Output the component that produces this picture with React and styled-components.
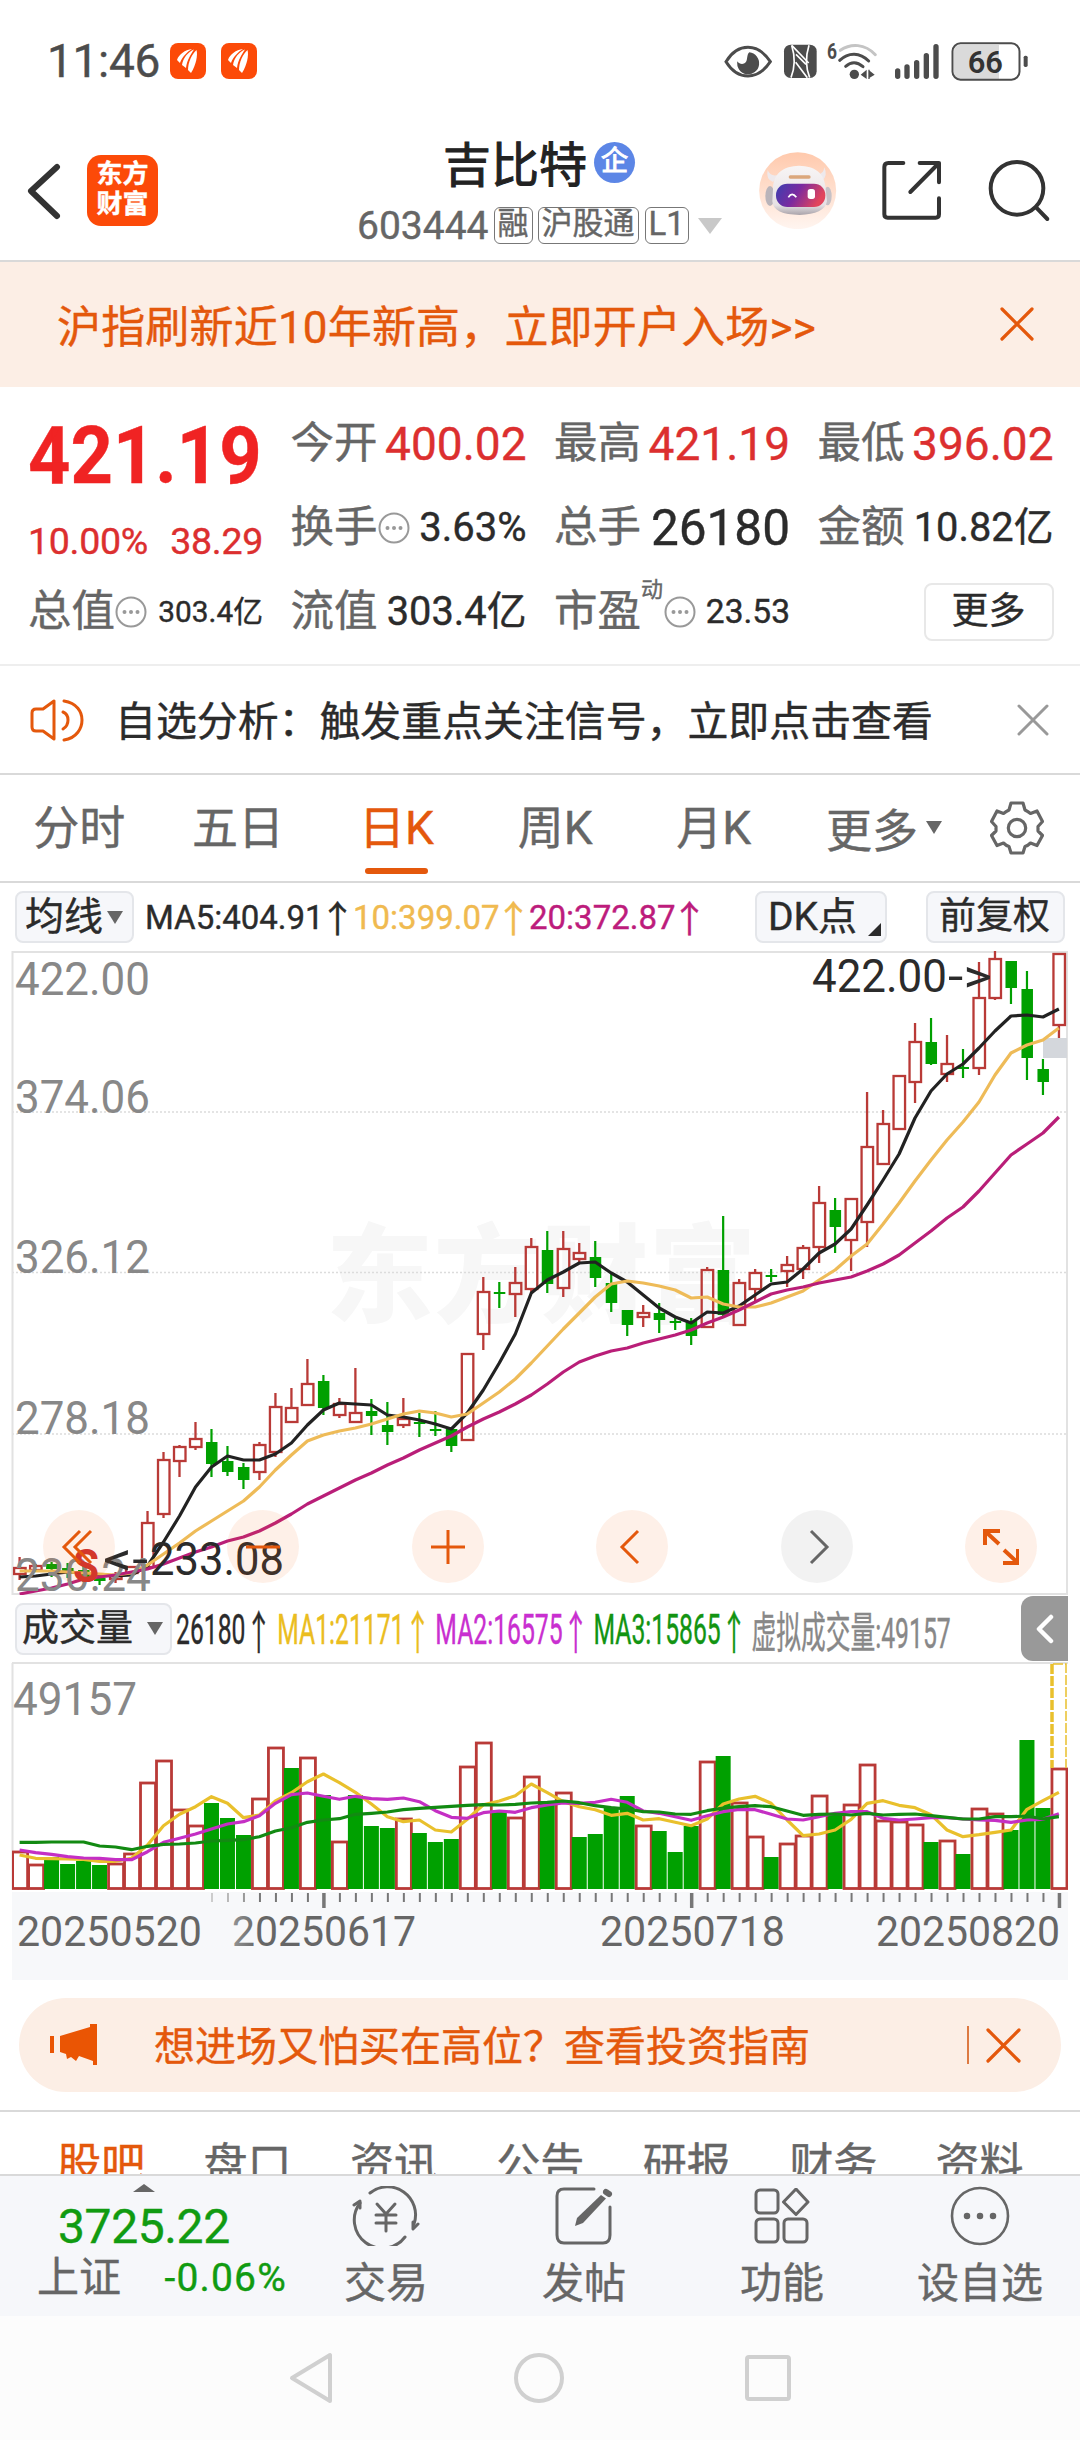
import styled, { createGlobalStyle, css } from 'styled-components';

const ORANGE = '#e4580c';
const PEACH = '#fceee5';
const RED = '#dc2f2f';
const UP = '#b93a37';
const DOWN = '#00a000';
const INK = '#2b2b2b';
const GREY = '#666';

const GlobalStyle = createGlobalStyle`
  * { box-sizing: border-box; }
  body {
    margin: 0;
    background: #fff;
    color: ${INK};
    font-family: Roboto, "Noto Sans CJK SC", sans-serif;
    -webkit-font-smoothing: antialiased;
    -webkit-text-stroke: 0.4px;
  }
  svg { display: block; flex: none; -webkit-text-stroke: 0; }
`;

/* ---------- chart data ---------- */

// [high, body top, body bottom, low, up?]
const candles = [
  [1557, 1568, 1574, 1580, 1], [1564, 1566, 1570, 1572, 1], [1562, 1564, 1569, 1577, 0],
  [1563, 1568, 1573, 1578, 0], [1566, 1570, 1579, 1582, 0], [1575, 1578, 1581, 1585, 0],
  [1572, 1576, 1579, 1583, 1], [1566, 1567, 1573, 1574, 1], [1511, 1523, 1567, 1568, 1],
  [1452, 1460, 1514, 1518, 1], [1445, 1447, 1461, 1477, 1], [1422, 1439, 1447, 1450, 1],
  [1429, 1442, 1464, 1477, 0], [1446, 1461, 1472, 1476, 0], [1463, 1467, 1480, 1489, 0],
  [1442, 1445, 1472, 1480, 1], [1393, 1407, 1452, 1457, 1], [1388, 1408, 1422, 1423, 1],
  [1359, 1384, 1405, 1406, 1], [1375, 1381, 1408, 1415, 0], [1398, 1404, 1415, 1418, 1],
  [1368, 1413, 1422, 1423, 1], [1399, 1411, 1416, 1435, 0], [1402, 1425, 1432, 1445, 0],
  [1398, 1419, 1425, 1428, 1], [1413, 1422, 1423, 1437, 0], [1411, 1429, 1431, 1436, 0],
  [1427, 1429, 1446, 1452, 0], [1354, 1354, 1440, 1440, 1], [1277, 1292, 1334, 1350, 1],
  [1282, 1292, 1294, 1308, 0], [1267, 1283, 1294, 1317, 1], [1238, 1247, 1289, 1293, 1],
  [1231, 1250, 1284, 1293, 0], [1231, 1249, 1288, 1297, 1], [1243, 1253, 1259, 1263, 1],
  [1241, 1257, 1278, 1287, 0], [1273, 1283, 1303, 1312, 0], [1310, 1310, 1325, 1336, 0],
  [1305, 1313, 1317, 1327, 1], [1303, 1313, 1320, 1333, 0], [1317, 1321, 1322, 1330, 0],
  [1318, 1321, 1336, 1345, 0], [1267, 1270, 1327, 1328, 1], [1216, 1270, 1315, 1317, 0],
  [1279, 1283, 1325, 1326, 1], [1269, 1273, 1289, 1302, 1], [1269, 1275, 1276, 1282, 0],
  [1256, 1265, 1271, 1287, 1], [1245, 1248, 1269, 1279, 1], [1186, 1203, 1247, 1263, 1],
  [1198, 1210, 1227, 1253, 0], [1198, 1199, 1240, 1271, 1], [1092, 1147, 1222, 1247, 1],
  [1110, 1124, 1164, 1165, 1], [1076, 1076, 1129, 1129, 1], [1023, 1042, 1082, 1103, 1],
  [1018, 1042, 1064, 1065, 0], [1035, 1064, 1074, 1082, 1], [1049, 1067, 1069, 1078, 0],
  [962, 998, 1068, 1075, 1], [951, 959, 998, 1000, 1], [961, 961, 988, 1004, 0],
  [971, 989, 1058, 1080, 0], [1059, 1069, 1082, 1095, 0], [953, 954, 1025, 1038, 1],
];

const ma5 = [
  1577, 1576, 1574, 1572, 1573, 1575, 1576, 1575, 1566, 1542, 1516, 1487, 1467, 1456, 1460, 1460, 1454,
  1443, 1425, 1410, 1403, 1404, 1405, 1415, 1417, 1420, 1424, 1429, 1413, 1390, 1363, 1334, 1293,
  1280, 1272, 1263, 1262, 1273, 1282, 1295, 1308, 1317, 1323, 1312, 1313, 1306, 1295, 1284, 1282,
  1269, 1253, 1244, 1229, 1205, 1180, 1154, 1118, 1091, 1074, 1064, 1048, 1031, 1016, 1015, 1017, 1009,
];
const ma10 = [
  1571, 1571, 1571, 1572, 1573, 1574, 1575, 1573, 1565, 1554, 1543, 1531, 1521, 1511, 1501, 1487, 1470,
  1455, 1441, 1435, 1431, 1428, 1424, 1419, 1414, 1411, 1413, 1417, 1414, 1403, 1392, 1379, 1363,
  1346, 1329, 1313, 1297, 1284, 1281, 1283, 1286, 1290, 1298, 1297, 1304, 1307, 1307, 1303, 1297,
  1291, 1280, 1270, 1256, 1244, 1224, 1203, 1181, 1160, 1140, 1122, 1102, 1075, 1053, 1045, 1040, 1028,
];
const ma20 = [
  1594, 1591, 1588, 1584, 1579, 1577, 1575, 1572, 1569, 1564, 1558, 1552, 1547, 1541, 1537, 1531, 1523,
  1514, 1504, 1496, 1488, 1480, 1473, 1465, 1458, 1450, 1443, 1436, 1427, 1419, 1412, 1404, 1395,
  1384, 1372, 1362, 1356, 1351, 1348, 1343, 1339, 1335, 1330, 1323, 1317, 1310, 1302, 1294, 1290,
  1287, 1283, 1280, 1277, 1271, 1264, 1255, 1243, 1231, 1218, 1207, 1191, 1173, 1155, 1144, 1133, 1117,
];

// top edge of every volume bar, same order as the candles
const volumeTops = [
  1852, 1865, 1857, 1864, 1861, 1865, 1864, 1854, 1783, 1761, 1810, 1826, 1803, 1818, 1835, 1799, 1748,
  1768, 1758, 1795, 1842, 1795, 1826, 1828, 1819, 1833, 1842, 1839, 1767, 1743, 1812, 1818, 1777,
  1803, 1793, 1837, 1834, 1808, 1796, 1826, 1831, 1852, 1826, 1762, 1756, 1803, 1837, 1857, 1844,
  1836, 1796, 1813, 1805, 1765, 1821, 1822, 1825, 1842, 1841, 1854, 1809, 1814, 1830, 1740, 1808, 1769,
];
const volumeDown = [
  2, 3, 4, 5, 12, 13, 14, 17, 19, 21, 22, 23, 25, 26, 27, 30, 33, 35, 36, 37, 38, 40, 41, 42, 44,
  47, 51, 57, 59, 62, 63, 64,
];

// volume averages are kept at three steps per pixel
const vma1 = [
  645, 655, 656, 657, 658, 664, 664, 655, 615, 557, 523, 500, 470, 490, 533, 525, 483, 458, 425, 402,
  428, 457, 492, 530, 545, 540, 570, 576, 538, 494, 483, 467, 432, 458, 485, 500, 509, 526, 520, 540,
  536, 547, 557, 537, 492, 477, 469, 490, 540, 587, 582, 570, 538, 490, 482, 496, 503, 524, 570, 590,
  584, 577, 570, 508, 482, 457,
];
const vma2 = [
  630, 638, 643, 650, 654, 655, 659, 659, 635, 607, 595, 582, 567, 552, 545, 527, 490, 464, 459, 469,
  478, 469, 476, 478, 474, 485, 512, 532, 535, 518, 513, 517, 503, 495, 489, 490, 487, 478, 487, 513,
  520, 530, 541, 527, 515, 508, 509, 523, 537, 540, 530, 520, 515, 515, 535, 540, 537, 533, 533, 537,
  540, 541, 547, 540, 538, 521,
];
const vma3 = [
  607, 607, 606, 606, 606, 618, 621, 629, 619, 613, 612, 609, 603, 601, 599, 590, 573, 563, 547, 540,
  536, 523, 520, 516, 509, 505, 502, 499, 496, 494, 495, 493, 489, 487, 483, 488, 497, 503, 507, 515,
  516, 522, 523, 512, 504, 500, 497, 500, 513, 526, 523, 522, 525, 520, 525, 523, 522, 527, 532, 537,
  537, 530, 530, 528, 537, 530,
];

const cx = (i) => 19.6 + 15.99 * i;
const line = (ys) => ys.map((y, i) => `${cx(i).toFixed(1)},${y}`).join(' ');
const volLine = (ys) => line(ys.map((v) => (1640 + v / 3).toFixed(1)));

/* ---------- small drawings ---------- */

// box is in drawing units, k is how many units make one pixel
const Drawing = ({ box, k = 1, children, ...rest }) => (
  <svg viewBox={box.join(' ')} width={box[2] / k} height={box[3] / k} fill="none" {...rest}>
    {children}
  </svg>
);

const AppBadge = () => (
  <Drawing box={[0, 0, 36, 36]}>
    <rect width="36" height="36" rx="8" fill="#fc4a08" />
    <path d="M7 17C9 11 15 7 22 6C17 9 12 14 10 20Z" fill="#fff" />
    <path d="M12 22C13 15 18 9 24 6.500C21 11 17 17 16 25Z" fill="#fff" />
    <path d="M18 27C18 19 22 11 26.500 7C28 12 26 22 21 30Z" fill="#fff" />
  </Drawing>
);

const Eye = () => (
  <Drawing box={[72, 120, 162, 120]} k={3}>
    <path d="M78 182C96 153 120 139 144 139S192 153 211 182C192 211 168 225 144 225S96 211 78 182Z" stroke="#4c4c4c" strokeWidth="9" />
    <path d="M148 154A33 33 0 1 1 112 181C118 190 130 192 137 184C144 176 139 162 148 154Z" fill="#4c4c4c" />
  </Drawing>
);

const Nfc = () => (
  <Drawing box={[234, 120, 132, 120]} k={3}>
    <rect x="252" y="131" width="98" height="100" rx="20" fill="#4c4c4c" />
    <path d="M275 133C285 165 285 200 273 230" stroke="#fff" strokeWidth="5" />
    <path d="M276 134L326 186M288 160L318 190M287 184L322 230" stroke="#fff" strokeWidth="5" />
    <path d="M327 133C317 165 317 200 329 230" stroke="#fff" strokeWidth="5" />
  </Drawing>
);

const Wifi = () => (
  <Drawing box={[366, 120, 192, 120]} k={3}>
    <text x="381" y="173" fontSize="66" fontWeight="700" fill="#4c4c4c" textLength="30" lengthAdjust="spacingAndGlyphs">6</text>
    <g strokeLinecap="round" stroke="#4c4c4c" strokeWidth="9">
      <path d="M421 148C453 126 495 128 526 161" stroke="#c4c4c4" />
      <path d="M419 178C445 153 480 153 506 180" />
      <path d="M437 196C453 182 472 182 489 197" />
    </g>
    <circle cx="463" cy="220" r="14" fill="#4c4c4c" />
    <path d="M482 221L500 206V234Z M505 206H509V234H505Z M509 209L524 221L509 230Z" fill="#4c4c4c" />
  </Drawing>
);

const Signal = () => (
  <Drawing box={[558, 120, 177, 120]} k={3}>
    <g stroke="#4c4c4c" strokeWidth="16" strokeLinecap="round">
      <path d="M593 210V226M621 198V226M650 185V226M679 164V226M708 137V226" />
    </g>
  </Drawing>
);

const Battery = () => (
  <Drawing box={[735, 120, 255, 120]} k={3}>
    <path d="M780 132H897V234H780Q762 234 762 214V152Q762 132 780 132Z" fill="#dadada" />
    <rect x="757.500" y="127" width="201" height="109" rx="24" stroke="#4c4c4c" strokeWidth="6" />
    <rect x="971" y="164" width="12" height="34" rx="5" fill="#4c4c4c" />
    <text x="803" y="217" fontSize="94" fontWeight="600" fill="#333" textLength="106" lengthAdjust="spacingAndGlyphs">66</text>
  </Drawing>
);

const Back = () => (
  <Drawing box={[28, 162, 34, 58]}>
    <path d="M58 167L32 191L58 216" stroke="#333" strokeWidth="6" strokeLinecap="round" strokeLinejoin="round" />
  </Drawing>
);

const Robot = () => (
  <Drawing box={[180, 458, 232, 232]} k={3}>
    <defs>
      <linearGradient id="halo" x1="0" y1="0" x2="0" y2="1">
        <stop offset="0" stopColor="#ffc9ac" />
        <stop offset="1" stopColor="#fff5f0" />
      </linearGradient>
      <linearGradient id="visor" x1="0" y1="0" x2="1" y2=".3">
        <stop offset="0" stopColor="#3b3fb0" />
        <stop offset=".5" stopColor="#7a2aa0" />
        <stop offset="1" stopColor="#e2455c" />
      </linearGradient>
      <linearGradient id="helmet" x1="0" y1="0" x2="0" y2="1">
        <stop offset="0" stopColor="#f8f5f5" />
        <stop offset=".8" stopColor="#e6e1e4" />
        <stop offset="1" stopColor="#a9a3aa" />
      </linearGradient>
    </defs>
    <circle cx="296" cy="574" r="115.500" fill="url(#halo)" />
    <ellipse cx="213" cy="590" rx="14" ry="30" fill="#b9b4ba" />
    <ellipse cx="386" cy="590" rx="12" ry="28" fill="#c6c1c6" />
    <path d="M206 512Q200 540 222 548L240 526Q214 534 206 512ZM376 504Q388 530 368 546L350 524Q374 528 376 504Z" fill="#eee9ec" />
    <path d="M222 570C222 520 255 500 300 499C348 500 378 520 380 570L384 606C380 632 350 646 302 647C250 646 222 634 220 606Z" fill="url(#helmet)" />
    <path d="M274 533H330" stroke="#dba77c" strokeWidth="10" strokeLinecap="round" />
    <rect x="231" y="553" width="148" height="70" rx="34" fill="url(#visor)" />
    <path d="M268 594Q279 576 292 594" stroke="#fff" strokeWidth="5" />
    <rect x="326" y="569" width="22" height="30" rx="8" fill="#fff" />
  </Drawing>
);

const Share = () => (
  <Drawing box={[540, 480, 184, 188]} k={3}>
    <path d="M607 492H562Q550 492 550 504V646Q550 656 560 656H704Q714 656 714 646V598M656 492H714V550M714 492L628 579" stroke="#333" strokeWidth="12" strokeLinecap="round" strokeLinejoin="round" />
  </Drawing>
);

const Search = () => (
  <Drawing box={[860, 474, 192, 196]} k={3}>
    <circle cx="950" cy="565" r="79" stroke="#333" strokeWidth="12" />
    <path d="M1008 623L1041 657" stroke="#333" strokeWidth="12" strokeLinecap="round" />
  </Drawing>
);

const Cross = ({ size = 34, color = ORANGE, weight = 3.2 }) => (
  <Drawing box={[0, 0, size, size]}>
    <path d={`M2 2L${size - 2} ${size - 2}M${size - 2} 2L2 ${size - 2}`} stroke={color} strokeWidth={weight} strokeLinecap="round" />
  </Drawing>
);

const Dots = () => (
  <Drawing box={[0, 0, 32, 32]}>
    <circle cx="16" cy="16" r="14.500" stroke="#999" strokeWidth="2" />
    <path d="M9.500 16H9.510M16 16H16.010M22.500 16H22.510" stroke="#999" strokeWidth="4" strokeLinecap="round" />
  </Drawing>
);

const Speaker = () => (
  <Drawing box={[30, 697, 56, 44]}>
    <g stroke={ORANGE} strokeWidth="3" strokeLinejoin="round" strokeLinecap="round">
      <path d="M54 700V738L43 730H36Q32 730 32 726V712Q32 708 36 708H43Z" />
      <path d="M63 711Q68 713 68 719T63 728M64 700C77 702 82 711 82 719S77 737 64 739" />
    </g>
  </Drawing>
);

const Gear = () => (
  <Drawing box={[0, 0, 54, 54]}>
    <g stroke="#666" strokeWidth="3.200" strokeLinejoin="round">
      <path d="M21 2H33L35 9Q38 10.500 40.500 12.500L47 10L52.500 20.500L48 25.500V30L52.500 34.500L47 44.500L40.500 42Q38 44.500 35 45.500L33 52H21L19 45.500Q16 44.500 13.500 42L7 44.500L1.500 34.500L6 30V25.500L1.500 20.500L7 10L13.500 12.500Q16 10.500 19 9Z" />
      <circle cx="27" cy="27" r="8.700" />
    </g>
  </Drawing>
);

const Horn = () => (
  <Drawing box={[50, 2024, 48, 44]}>
    <path d="M50 2037H54V2054H50ZM60 2037L90 2028V2025H97V2066H93V2062L79 2057L76 2062L71 2058L67 2060L66 2055L60 2053Z" fill="#ea5504" />
  </Drawing>
);

const Trade = () => (
  <Drawing box={[0, 0, 68, 60]}>
    <g stroke={GREY} strokeWidth="3" strokeLinecap="round" strokeLinejoin="round">
      <path d="M18 7A28 28 0 0 1 62 38M53 51A28 28 0 0 1 8 17" />
      <path d="M2 19L8 15L8 22M66 38L61 43L61 36" />
      <path d="M25 18L34 28L43 18M34 28V45M24 29H44M24 37H44" />
    </g>
  </Drawing>
);

const Compose = () => (
  <Drawing box={[0, 0, 58, 58]}>
    <path d="M39 2H9Q2 2 2 9V48Q2 56 9 56H48Q55 56 55 48V20" stroke={GREY} strokeWidth="3" strokeLinecap="round" />
    <path d="M46 8L51 11.500L28 36L20 39L22 31Z" fill={GREY} />
    <path d="M51 5L54 7" stroke={GREY} strokeWidth="6" strokeLinecap="round" />
  </Drawing>
);

const Modules = () => (
  <Drawing box={[0, 0, 56, 56]}>
    <g stroke={GREY} strokeWidth="3" strokeLinejoin="round">
      <rect x="2" y="2" width="22" height="23" rx="4" />
      <rect x="2" y="31" width="22" height="23" rx="4" />
      <rect x="30" y="31" width="23" height="23" rx="4" />
      <path d="M42 1L54 14L42 26.500L29.500 14Z" />
    </g>
  </Drawing>
);

const MoreCircle = () => (
  <Drawing box={[0, 0, 60, 60]}>
    <circle cx="30" cy="30" r="28" stroke={GREY} strokeWidth="2.600" />
    <path d="M17 30H17.010M30 30H30.010M43 30H43.010" stroke={GREY} strokeWidth="6.500" strokeLinecap="round" />
  </Drawing>
);

const Caret = styled.i`
  width: 0;
  height: 0;
  flex: none;
  border: ${({ $w }) => $w / 2}px solid transparent;
  border-bottom-width: 0;
  border-top: ${({ $h }) => $h}px solid ${({ $c }) => $c || '#666'};
`;

/* ---------- layout ---------- */

const Screen = styled.div`
  width: 1080px;
  height: 2440px;
  display: flex;
  flex-direction: column;
  overflow: hidden;
  background: #fff;
`;

const row = css`
  display: flex;
  align-items: center;
  flex: none;
`;

const StatusBar = styled.div`
  ${row}
  height: 121px;
  padding: 0 50px 0 47px;
  color: #4c4c4c;
`;

const Clock = styled.span`
  width: 123px;
  font-size: 46px;
  letter-spacing: -0.3px;
`;

const Badges = styled.div`
  display: flex;
  gap: 15px;
`;

const StatusIcons = styled.div`
  display: flex;
  margin-left: auto;
`;

const Header = styled.header`
  ${row}
  height: 141px;
  padding: 0 29px 0 27px;
  border-bottom: 2px solid #d9d9d9;
`;

const Logo = styled.div`
  width: 71px;
  height: 71px;
  margin-left: 26px;
  border-radius: 14px;
  background: #fc4a08;
  color: #fff;
  font-size: 26px;
  font-weight: 700;
  line-height: 30px;
  text-align: center;
  padding-top: 4px;
`;

const Title = styled.div`
  width: 370px;
  margin-left: 199px;
  display: flex;
  flex-direction: column;
`;

const Name = styled.div`
  display: flex;
  align-items: center;
  height: 66px;
  padding-left: 86px;
  font-size: 48px;
  color: #222;
  -webkit-text-stroke: 1px;
`;

const CompanyMark = styled.span`
  width: 41px;
  height: 41px;
  margin: 4px 0 0 7px;
  border-radius: 50%;
  background: #5c86e6;
  color: #fff;
  font-size: 27px;
  line-height: 38px;
  text-align: center;
`;

const Code = styled.div`
  display: flex;
  align-items: center;
  height: 60px;
  padding-top: 4px;
  font-size: 39px;
  color: ${GREY};
  white-space: nowrap;
`;

const Tag = styled.span`
  height: 37px;
  margin-left: ${({ $gap = 5 }) => $gap}px;
  padding: 0 3px;
  border: 1.5px solid #777;
  border-radius: 6px;
  font-size: ${({ $size = 31 }) => $size}px;
  line-height: 32px;
`;

const HeaderTools = styled.div`
  display: flex;
  align-items: center;
  margin-left: auto;
  gap: 44.500px;
`;

const Banner = styled.div`
  ${row}
  justify-content: space-between;
  height: 125px;
  padding: 0 46px 2px 57px;
  background: ${PEACH};
  color: ${ORANGE};
  font-size: 44px;
  letter-spacing: 0.18px;
`;

const Quote = styled.section`
  flex: none;
  display: grid;
  grid-template-columns: 235px 236px 236px 236px;
  grid-template-rows: repeat(3, 84px);
  column-gap: 27.500px;
  height: 279px;
  padding: 15px 0 0 28px;
  border-bottom: 2px solid #eee;
`;

const PriceBlock = styled.div`
  grid-row: span 2;
  color: ${RED};
`;

const Price = styled.div`
  height: 106px;
  line-height: 109px;
  font-size: 80px;
  font-weight: 700;
  color: #f02323;
  transform: scaleX(0.925);
  transform-origin: 0 0;
`;

const Change = styled.div`
  display: flex;
  justify-content: space-between;
  font-size: 37.500px;
  line-height: 66px;
  letter-spacing: -0.3px;
`;

const Cell = styled.div`
  display: flex;
  align-items: center;
  color: ${GREY};
  font-size: 43.500px;
  white-space: nowrap;
  line-height: 84px;
`;

const Sup = styled.sup`
  align-self: flex-start;
  width: 23px;
  font-size: 22px;
  line-height: 40px;
`;

const Value = styled.span`
  margin-left: auto;
  font-size: ${({ $size }) => $size}px;
  color: ${({ $red }) => ($red ? RED : INK)};
`;

const MoreButton = styled.button`
  align-self: center;
  justify-self: end;
  width: 130px;
  height: 58px;
  padding: 0;
  border: 2px solid #e8e8e8;
  border-radius: 8px;
  background: #fff;
  color: ${INK};
  font: 37px/50px Roboto, "Noto Sans CJK SC", sans-serif;
`;

const Notice = styled.div`
  ${row}
  height: 109px;
  padding: 0 31px 0 30px;
  border-bottom: 2px solid #d9d9d9;
  font-size: 40.900px;

  span { margin: 0 0 3px 29px; }
  svg:last-child { margin-left: auto; }
`;

const Periods = styled.nav`
  ${row}
  height: 108px;
  border-bottom: 2px solid #d9d9d9;
`;

const Period = styled.div`
  width: 158.600px;
  height: 100%;
  display: flex;
  flex-direction: column;
  align-items: center;
  font-size: 46px;
  line-height: 107px;
  color: ${({ $on }) => ($on ? ORANGE : GREY)};

  &::after {
    content: '';
    width: 63px;
    height: 6px;
    margin-top: -14px;
    border-radius: 3px;
    background: ${({ $on }) => ($on ? ORANGE : 'transparent')};
  }
`;

const MorePeriods = styled.div`
  display: flex;
  align-items: center;
  gap: 8px;
  width: 197px;
  padding: 0 0 2px 33px;
  font-size: 46px;
  color: ${GREY};
`;

const Indicators = styled.div`
  ${row}
  height: 68px;
  padding: 0 15px;
  font-size: 33px;
`;

const Chip = styled.div`
  display: flex;
  align-items: center;
  justify-content: space-between;
  flex: none;
  width: ${({ $w }) => $w}px;
  height: 52px;
  padding: 0 ${({ $right = 9 }) => $right}px 0 ${({ $left = 11 }) => $left}px;
  border: 2px solid #e4e6ea;
  border-radius: 8px;
  background: #f6f7fa;
  font-size: ${({ $size = 38 }) => $size}px;
  line-height: 46px;
  white-space: nowrap;
`;

const Corner = styled.i`
  align-self: flex-end;
  margin: 0 -5px 5px 0;
  border-left: 13px solid transparent;
  border-bottom: 13px solid ${INK};
`;

const Average = styled.span`
  display: flex;
  align-items: center;
  flex: none;
  width: ${({ $w }) => $w}px;
  color: ${({ $c }) => $c};
  white-space: nowrap;
`;

const Arrow = styled.b`
  width: ${({ $w = 28 }) => $w}px;
  font-weight: 400;
  font-size: ${({ $size = 37 }) => $size}px;
  display: flex;
  justify-content: center;
`;

const Spacer = styled.div`
  flex: 1;
`;

const ChartArea = styled.div`
  position: relative;
  flex: none;
  height: 644px;
`;

const ChartTools = styled.div`
  position: absolute;
  left: 43px;
  right: 43px;
  bottom: 12px;
  display: flex;
  justify-content: space-between;
`;

const RoundTool = styled.div`
  width: 72px;
  height: 73px;
  border-radius: 50%;
  display: grid;
  place-items: center;
  background: ${({ $muted }) => ($muted ? 'rgba(0, 0, 0, 0.05)' : 'rgba(250, 106, 30, 0.1)')};
`;

const VolumeBar = styled.div`
  ${row}
  height: 67px;
  padding: 0 12px 0 15px;
`;

const Condensed = styled.div`
  display: flex;
  width: 840px;
  margin-left: 4px;
  font-size: 43px;
  white-space: nowrap;
  transform: scaleX(0.575);
  transform-origin: 0 50%;
`;

const SideTab = styled.div`
  width: 47px;
  height: 65px;
  margin-left: auto;
  flex: none;
  display: grid;
  place-items: center;
  border-radius: 12px 0 0 12px;
  background: #999;
`;

const Guide = styled.div`
  ${row}
  height: 94px;
  margin: 18px 19px;
  padding: 0 40px 0 31px;
  border-radius: 47px;
  background: ${PEACH};
  color: ${ORANGE};
  font-size: 41px;

  span { margin: 0 0 5px 56px; }
`;

const Divider = styled.i`
  width: 2px;
  height: 38px;
  margin: 0 17px 0 auto;
  background: #dd7a42;
`;

const Sections = styled.nav`
  flex: none;
  display: grid;
  grid-template-columns: repeat(7, 146.400px);
  height: 64px;
  padding: 20px 0 0 28px;
  border-top: 2px solid #d9d9d9;
  overflow: hidden;
  color: ${GREY};
  font-size: 44px;
  line-height: 66px;
  text-align: center;

  span:first-child { color: ${ORANGE}; }
`;

const BottomBar = styled.div`
  flex: none;
  display: flex;
  height: 142px;
  border-top: 2px solid #d9d9d9;
  background: #f6f7fa;
`;

const IndexBlock = styled.div`
  position: relative;
  width: 287px;
  display: flex;
  flex-direction: column;
  color: #119b11;

  & > i {
    position: absolute;
    left: 133px;
    top: 8px;
    transform: rotate(180deg);
  }
`;

const IndexValue = styled.div`
  padding: 21px 0 0 58px;
  font-size: 48px;
  line-height: 60px;
  letter-spacing: -0.4px;
`;

const IndexChange = styled.div`
  display: flex;
  justify-content: space-between;
  align-items: center;
  padding-left: 37px;
  font-size: 39px;
  line-height: 42px;
  letter-spacing: 1.2px;

  span { color: ${GREY}; font-size: 42px; letter-spacing: 0; }
`;

const Action = styled.div`
  width: 198px;
  display: flex;
  flex-direction: column;
  align-items: center;
  color: ${GREY};
  font-size: 42px;
  line-height: 56px;
`;

const ActionIcon = styled.div`
  height: 80px;
  display: grid;
  place-items: center;
`;

const SystemNav = styled.div`
  flex: 1;
  display: flex;
  justify-content: center;
  align-items: center;
  gap: 181px;
  background: #fcfcfc;
`;

/* ---------- charts ---------- */

const AxisText = styled.text`
  font-size: ${({ $size = 46 }) => $size}px;
  fill: ${({ $c = '#888' }) => $c};
`;

const Label = ({ w, children, ...rest }) => (
  <AxisText textLength={w} lengthAdjust="spacingAndGlyphs" {...rest}>{children}</AxisText>
);

const PriceChart = () => (
  <svg width="1080" height="644" viewBox="0 951 1080 644" fill="none">
    <text x="326" y="1314" fontSize="107" fontWeight="900" fill="#f7f7f7" textLength="430">东方财富</text>
    <g stroke="#dcdcdc" strokeWidth="1.500" strokeDasharray="2 2">
      <path d="M12 1112H1067M12 1272.500H1067M12 1434H1067" />
    </g>
    <rect x="12.500" y="952" width="1054.500" height="642" stroke="#e2e2e2" strokeWidth="2" />
    <rect x="1043" y="1038" width="24" height="20" fill="#d4d7dc" />
    {candles.map(([hi, top, bottom, lo, up], i) => (
      up ? (
        <g key={i} stroke={UP} strokeWidth="2.300">
          <path d={`M${cx(i)} ${hi}V${top}M${cx(i)} ${bottom}V${lo}`} />
          <rect x={cx(i) - 5.500} y={top} width="11.500" height={bottom - top} />
        </g>
      ) : (
        <g key={i} fill={DOWN}>
          <rect x={cx(i) - 1.100} y={hi} width="2.200" height={lo - hi} />
          <rect x={cx(i) - 5.500} y={top} width="11.500" height={Math.max(bottom - top, 2)} />
        </g>
      )
    ))}
    <g strokeWidth="3.200" strokeLinejoin="round">
      <polyline points={line(ma5)} stroke="#222" />
      <polyline points={line(ma10)} stroke="#eebb58" />
      <polyline points={line(ma20)} stroke="#b91e78" />
    </g>
    <Label x="15" y="995" w="135">422.00</Label>
    <Label x="15" y="1113" w="135">374.06</Label>
    <Label x="15" y="1273" w="135">326.12</Label>
    <Label x="15" y="1434" w="135">278.18</Label>
    <Label x="15" y="1591" w="136">230.24</Label>
    <text x="73" y="1582" fontSize="46" fontWeight="700" fill="#d0312d" textLength="26" lengthAdjust="spacingAndGlyphs">S</text>
    <Label x="812" y="992" w="135" $c={INK}>422.00</Label>
    <Label x="948" y="992" w="44" $c={INK}>-&gt;</Label>
    <Label x="103" y="1575" w="45" $c={INK}>&lt;-</Label>
    <Label x="150" y="1575" w="134" $c={INK}>233.08</Label>
  </svg>
);

const ticks = candles.map((_, i) => i).filter((i) => i >= 12);

const VolumeChart = () => (
  <svg width="1080" height="318" viewBox="0 1662 1080 318" fill="none">
    <defs>
      <linearGradient id="fade" gradientUnits="userSpaceOnUse" x1="200" y1="0" x2="258" y2="0">
        <stop offset="0" stopColor="#ccc" />
        <stop offset="1" stopColor="#666" />
      </linearGradient>
      <clipPath id="plot"><rect x="12" y="1660" width="1056" height="231" /></clipPath>
    </defs>
    <path d="M12 1663H1068M12.500 1663V1890" stroke="#e2e2e2" strokeWidth="2" />
    <rect x="12" y="1892" width="1056" height="88" fill="#f7f8fa" />
    <Label x="13" y="1715" w="124">49157</Label>
    <g clipPath="url(#plot)">
      {volumeTops.map((y, i) => (
        volumeDown.includes(i)
          ? <rect key={i} x={cx(i) - 7.500} y={y} width="15" height={1889 - y} fill={DOWN} />
          : <rect key={i} x={cx(i) - 7} y={y} width="15" height={1888.500 - y} stroke={UP} strokeWidth="2.800" fill="#fff" />
      ))}
      <path d="M1052 1664V1768" stroke="#e9c02c" strokeWidth="3.500" strokeDasharray="10 2" />
      <path d="M1053 1664H1066V1768" stroke="#e9c02c" strokeWidth="1.500" strokeDasharray="10 2" />
      <g strokeWidth="3.200" strokeLinejoin="round">
        <polyline points={volLine(vma1)} stroke="#e9c02c" />
        <polyline points={volLine(vma2)} stroke="#c42fc4" />
        <polyline points={volLine(vma3)} stroke="#128a12" />
      </g>
    </g>
    {ticks.map((i) => {
      const major = i === 19 || i === 42 || i === 65;
      return (
        <path
          key={i}
          d={`M${cx(i) + 0.500} 1893V${major ? 1908 : 1902}`}
          stroke={i < 15 ? ['#ccc', '#b8b8b8', '#999'][i - 12] : '#777'}
          strokeWidth={major ? 3.500 : 2}
        />
      );
    })}
    <Label x="17" y="1946" w="185" $size={42} $c="#666">20250520</Label>
    <Label x="232" y="1946" w="184" $size={42} $c="url(#fade)">20250617</Label>
    <Label x="600" y="1946" w="185" $size={42} $c="#666">20250718</Label>
    <Label x="876" y="1946" w="184" $size={42} $c="#666">20250820</Label>
  </svg>
);

const toolPaths = [
  { d: 'M19 2L3 18L19 34M30 2L14 18L30 34' },
  { d: 'M1 18H35' },
  { d: 'M1 18H35M18 1V35' },
  { d: 'M24 2L8 18L24 34' },
  { d: 'M12 2L28 18L12 34', muted: true },
  { d: 'M2 16V2H17M3 3L16 15M21 21L34 33M35 20V34H20', heavy: true },
];

const actions = [
  { label: '交易', icon: <Trade /> },
  { label: '发帖', icon: <Compose /> },
  { label: '功能', icon: <Modules /> },
  { label: '设自选', icon: <MoreCircle /> },
];

function App() {
  return (
    <Screen>
      <GlobalStyle />
      <StatusBar>
        <Clock>11:46</Clock>
        <Badges>
          <AppBadge />
          <AppBadge />
        </Badges>
        <StatusIcons>
          <Eye />
          <Nfc />
          <Wifi />
          <Signal />
          <Battery />
        </StatusIcons>
      </StatusBar>

      <Header>
        <Back />
        <Logo>东方<br />财富</Logo>
        <Title>
          <Name>吉比特<CompanyMark>企</CompanyMark></Name>
          <Code>
            603444
            <Tag>融</Tag>
            <Tag>沪股通</Tag>
            <Tag $gap={6} $size={33}>L1</Tag>
            <Caret $w={24} $h={16} $c="#c8c8c8" style={{ marginLeft: 9 }} />
          </Code>
        </Title>
        <HeaderTools>
          <Robot />
          <Share />
          <Search />
        </HeaderTools>
      </Header>

      <Banner>
        沪指刷新近10年新高，立即开户入场&gt;&gt;
        <Cross />
      </Banner>

      <Quote>
        <PriceBlock>
          <Price>421.19</Price>
          <Change><span>10.00%</span><span>38.29</span></Change>
        </PriceBlock>
        <Cell>今开<Value $size={46} $red>400.02</Value></Cell>
        <Cell>最高<Value $size={46} $red>421.19</Value></Cell>
        <Cell>最低<Value $size={46} $red>396.02</Value></Cell>
        <Cell>换手<Dots /><Value $size={40}>3.63%</Value></Cell>
        <Cell>总手<Value $size={49.500}>26180</Value></Cell>
        <Cell>金额<Value $size={39.800}>10.82亿</Value></Cell>
        <Cell>总值<Dots /><Value $size={29.800}>303.4亿</Value></Cell>
        <Cell>流值<Value $size={39.800}>303.4亿</Value></Cell>
        <Cell>市盈<Sup>动</Sup><Dots /><Value $size={33.500}>23.53</Value></Cell>
        <MoreButton>更多</MoreButton>
      </Quote>

      <Notice>
        <Speaker />
        <span>自选分析：触发重点关注信号，立即点击查看</span>
        <Cross size={32} color="#999" weight={3} />
      </Notice>

      <Periods>
        {['分时', '五日', '日K', '周K', '月K'].map((name) => (
          <Period key={name} $on={name === '日K'}>{name}</Period>
        ))}
        <MorePeriods>更多<Caret $w={17} $h={13} /></MorePeriods>
        <Gear />
      </Periods>

      <Indicators>
        <Chip $w={119} $left={8} $size={39}>均线<Caret $w={17} $h={13} /></Chip>
        <Average $w={208} $c={INK} style={{ marginLeft: 11 }}>MA5:404.91<Arrow>↑</Arrow></Average>
        <Average $w={176} $c="#f0ba50">10:399.07<Arrow>↑</Arrow></Average>
        <Average $w={176} $c="#bd1c7c">20:372.87<Arrow>↑</Arrow></Average>
        <Spacer />
        <Chip $w={132} $size={39}>DK点<Corner /></Chip>
        <Chip $w={139} $size={37} style={{ marginLeft: 39 }}>前复权</Chip>
      </Indicators>

      <ChartArea>
        <PriceChart />
        <ChartTools>
          {toolPaths.map(({ d, muted, heavy }) => (
            <RoundTool key={d} $muted={muted}>
              <Drawing box={[0, 0, 36, 36]}>
                <path d={d} stroke={muted ? '#666' : ORANGE} strokeWidth={heavy ? 4 : 3} />
              </Drawing>
            </RoundTool>
          ))}
        </ChartTools>
      </ChartArea>

      <VolumeBar>
        <Chip $w={157} $size={37} $left={5} $right={7}>成交量<Caret $w={17} $h={13} /></Chip>
        <Condensed>
          <Average $w={176} $c={INK}>26180<Arrow $size={46} $w={46}>↑</Arrow></Average>
          <Average $w={275} $c="#ebbd20">MA1:21171<Arrow $size={46} $w={46}>↑</Arrow></Average>
          <Average $w={275} $c="#c92fd0">MA2:16575<Arrow $size={46} $w={46}>↑</Arrow></Average>
          <Average $w={275} $c="#129412">MA3:15865<Arrow $size={46} $w={46}>↑</Arrow></Average>
          <Average $w={340} $c="#888">虚拟成交量:49157</Average>
        </Condensed>
        <SideTab>
          <Drawing box={[0, 0, 18, 30]}>
            <path d="M15 3L3 15L15 27" stroke="#fff" strokeWidth="4.500" strokeLinecap="round" strokeLinejoin="round" />
          </Drawing>
        </SideTab>
      </VolumeBar>
      <VolumeChart />

      <Guide>
        <Horn />
        <span>想进场又怕买在高位？查看投资指南</span>
        <Divider />
        <Cross size={35} />
      </Guide>

      <Sections>
        {['股吧', '盘口', '资讯', '公告', '研报', '财务', '资料'].map((name) => (
          <span key={name}>{name}</span>
        ))}
      </Sections>

      <BottomBar>
        <IndexBlock>
          <Caret $w={22} $h={8} />
          <IndexValue>3725.22</IndexValue>
          <IndexChange><span>上证</span>-0.06%</IndexChange>
        </IndexBlock>
        {actions.map(({ label, icon }) => (
          <Action key={label}>
            <ActionIcon>{icon}</ActionIcon>
            {label}
          </Action>
        ))}
      </BottomBar>

      <SystemNav>
        <Drawing box={[0, 0, 44, 52]}>
          <path d="M41 3V49L3 26Z" stroke="#d0d0d0" strokeWidth="4" strokeLinejoin="round" />
        </Drawing>
        <Drawing box={[0, 0, 50, 52]}>
          <circle cx="25" cy="26" r="23" stroke="#d0d0d0" strokeWidth="4" />
        </Drawing>
        <Drawing box={[0, 0, 46, 46]}>
          <rect x="2" y="2" width="42" height="42" rx="2" stroke="#d0d0d0" strokeWidth="4" />
        </Drawing>
      </SystemNav>
    </Screen>
  );
}

export default App;
